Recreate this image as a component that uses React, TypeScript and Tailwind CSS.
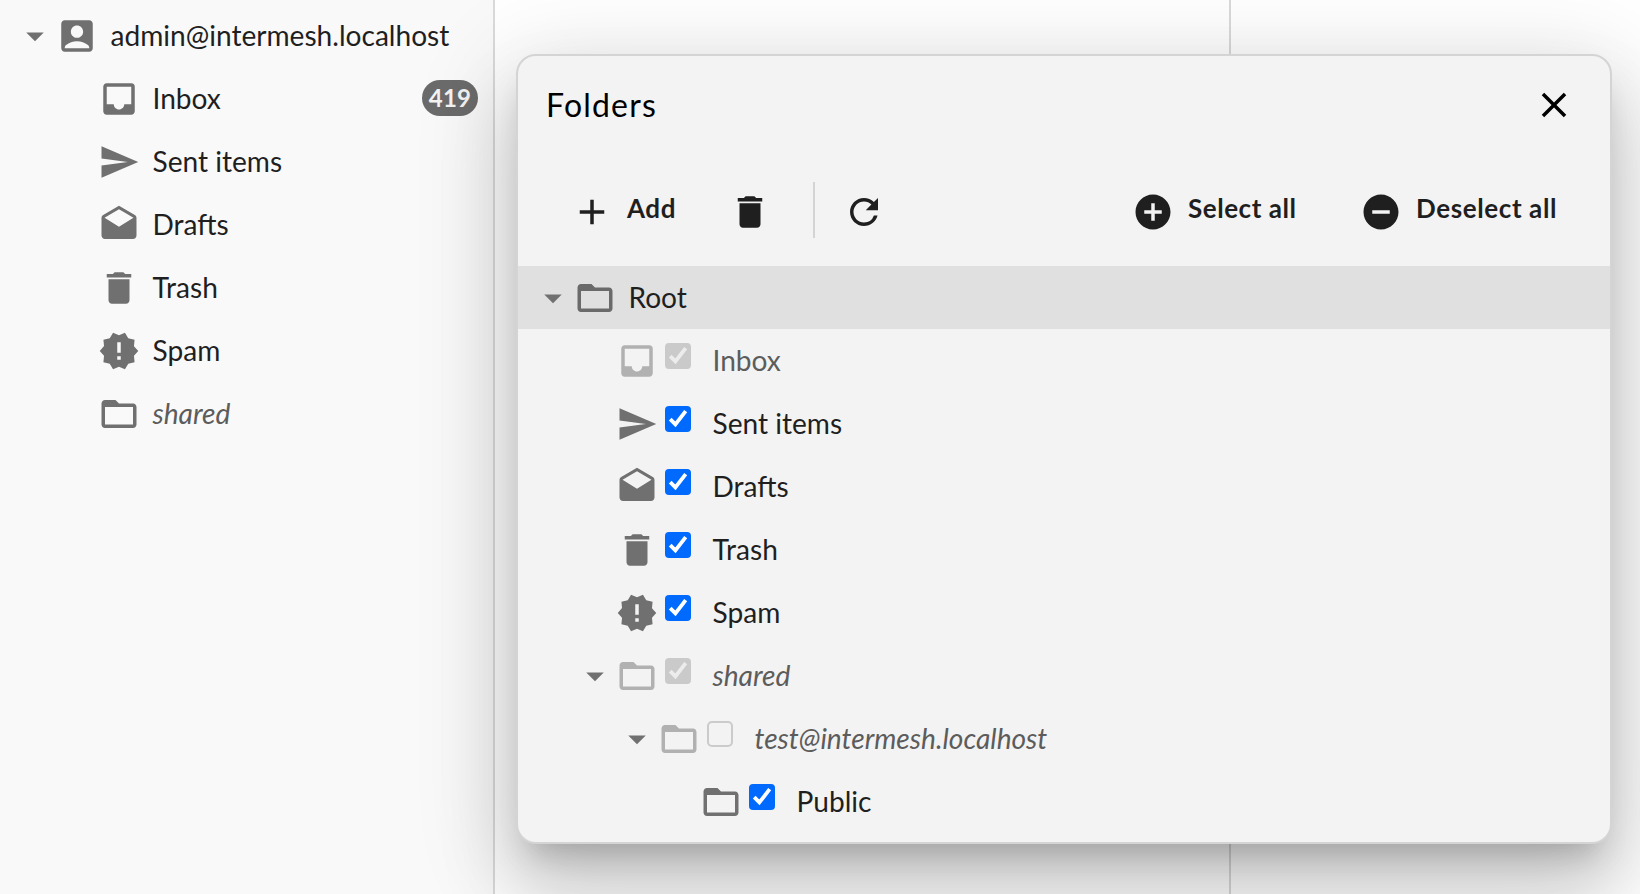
import type { IconType } from "react-icons";
import {
  MdAccountBox,
  MdAdd,
  MdAddCircle,
  MdArrowDropDown,
  MdClose,
  MdDelete,
  MdDrafts,
  MdFolderOpen,
  MdInbox,
  MdNewReleases,
  MdRefresh,
  MdRemoveCircle,
  MdSend,
} from "react-icons/md";

type Check = "on" | "locked" | "empty";

interface FolderRow {
  name: string;
  icon: IconType;
  level: string;
  check: Check;
  open?: boolean;
  italic?: boolean;
}

const sidebarFolders: { name: string; icon: IconType; count?: number; italic?: boolean }[] = [
  { name: "Inbox", icon: MdInbox, count: 419 },
  { name: "Sent items", icon: MdSend },
  { name: "Drafts", icon: MdDrafts },
  { name: "Trash", icon: MdDelete },
  { name: "Spam", icon: MdNewReleases },
  { name: "shared", icon: MdFolderOpen, italic: true },
];

const dialogFolders: FolderRow[] = [
  { name: "Inbox", icon: MdInbox, level: "pl-[56px]", check: "locked" },
  { name: "Sent items", icon: MdSend, level: "pl-[56px]", check: "on" },
  { name: "Drafts", icon: MdDrafts, level: "pl-[56px]", check: "on" },
  { name: "Trash", icon: MdDelete, level: "pl-[56px]", check: "on" },
  { name: "Spam", icon: MdNewReleases, level: "pl-[56px]", check: "on" },
  { name: "shared", icon: MdFolderOpen, level: "pl-[56px]", check: "locked", open: true, italic: true },
  { name: "test@intermesh.localhost", icon: MdFolderOpen, level: "pl-[98px]", check: "empty", open: true, italic: true },
  { name: "Public", icon: MdFolderOpen, level: "pl-[140px]", check: "on" },
];

function Caret({ open }: { open?: boolean }) {
  return (
    <span className="size-[42px] shrink-0 text-[#707070]">
      {open && <MdArrowDropDown className="size-[42px]" />}
    </span>
  );
}

function Checkbox({ state }: { state: Check }) {
  if (state === "empty") {
    return <span className="mb-[9px] size-[26px] shrink-0 rounded-[5px] border-2 border-[#cbcbcb]" />;
  }
  const locked = state === "locked";
  return (
    <span
      className={`mb-[9px] size-[26px] shrink-0 rounded-[4px] ${
        locked ? "bg-[#cacaca] text-[#ececec]" : "bg-[#006aff] text-white"
      }`}
    >
      <svg viewBox="0 0 26 26" className="size-[26px]" fill="none" stroke="currentColor" strokeWidth="3.8">
        <path d="M5.2 13.2L10.4 18.4L20.7 5.2" />
      </svg>
    </span>
  );
}

function Sidebar() {
  return (
    <aside className="w-[495px] shrink-0 border-r-2 border-[#dadada] bg-[#f9f9f9] pt-1">
      <div className="flex h-[63px] items-center pl-[14px]">
        <Caret open />
        <MdAccountBox className="size-[42px] text-[#707070]" />
        <span className="ml-[12.5px]">admin@intermesh.localhost</span>
      </div>
      {sidebarFolders.map(({ name, icon: Icon, count, italic }) => (
        <div key={name} className="flex h-[63px] items-center pr-[15px] pl-[98px]">
          <Icon className="size-[42px] text-[#707070]" />
          <span className={`ml-[12.5px] ${italic ? "text-[#5c5c5c] italic" : ""}`}>{name}</span>
          {count && (
            <span className="mb-[2px] ml-auto flex h-9 w-14 items-center justify-center rounded-full bg-[#6b6b6b] text-[24px] font-bold tracking-[0.3px] text-[#f3f3f3]">
              {count}
            </span>
          )}
        </div>
      ))}
    </aside>
  );
}

function Toolbar() {
  return (
    <div className="flex h-[114px] items-center pt-[2px] pr-[53px] pl-[52.5px] text-[26px] font-bold tracking-[0.55px]">
      <button className="flex items-center">
        <MdAdd className="mt-1 size-[42px]" />
        <span className="mb-1 ml-[14.5px]">Add</span>
      </button>
      <button className="mt-1 ml-[53px]">
        <MdDelete className="size-[42px]" />
      </button>
      <span className="ml-[42px] h-14 w-[2px] bg-[#d4d4d4]" />
      <button className="mt-1 ml-[28px]">
        <MdRefresh className="size-[42px]" />
      </button>
      <button className="ml-auto flex items-center">
        <MdAddCircle className="mt-1 size-[42px]" />
        <span className="mb-1 ml-[14px]">Select all</span>
      </button>
      <button className="ml-[63.5px] flex items-center">
        <MdRemoveCircle className="mt-1 size-[42px]" />
        <span className="mb-1 ml-[14px] tracking-[0.6px]">Deselect all</span>
      </button>
    </div>
  );
}

function FoldersDialog() {
  return (
    <section className="absolute top-[54px] left-[516px] flex h-[790px] w-[1096px] flex-col overflow-hidden rounded-[20px] border-2 border-[#d4d4d4] bg-[#f3f3f3] shadow-[0_22px_30px_-14px_rgba(0,0,0,0.2),0_48px_76px_6px_rgba(0,0,0,0.14),0_18px_92px_16px_rgba(0,0,0,0.12)]">
      <header className="flex h-[96px] items-center justify-between pr-[35px] pl-[28px] text-black">
        <h1 className="pt-[2px] text-[32px] tracking-[1.2px]">Folders</h1>
        <MdClose className="mt-[2px] size-[42px]" />
      </header>
      <Toolbar />
      <div className="flex h-[63px] items-center bg-[#e0e0e0] pl-[14px]">
        <Caret open />
        <MdFolderOpen className="size-[42px] text-[#6a6a6a]" />
        <span className="ml-[12.5px]">Root</span>
      </div>
      {dialogFolders.map(({ name, icon: Icon, level, check, open, italic }) => (
        <div key={name} className={`flex h-[63px] items-center ${level}`}>
          <Caret open={open} />
          <Icon className={`size-[42px] ${check === "on" ? "text-[#707070]" : "text-[#b1b1b1]"}`} />
          <span className="ml-[7px] flex">
            <Checkbox state={check} />
          </span>
          <span className={`ml-[21.5px] ${check === "on" ? "" : "text-[#5c5c5c]"} ${italic ? "italic" : ""}`}>
            {name}
          </span>
        </div>
      ))}
    </section>
  );
}

export default function App() {
  return (
    <div className="relative flex h-[894px] w-[1640px] overflow-hidden bg-white font-['Lato',sans-serif] text-[28.1px] leading-none text-[#1f1f1f]">
      <Sidebar />
      <div className="w-[736px] shrink-0 border-r-2 border-[#dadada]" />
      <FoldersDialog />
    </div>
  );
}
